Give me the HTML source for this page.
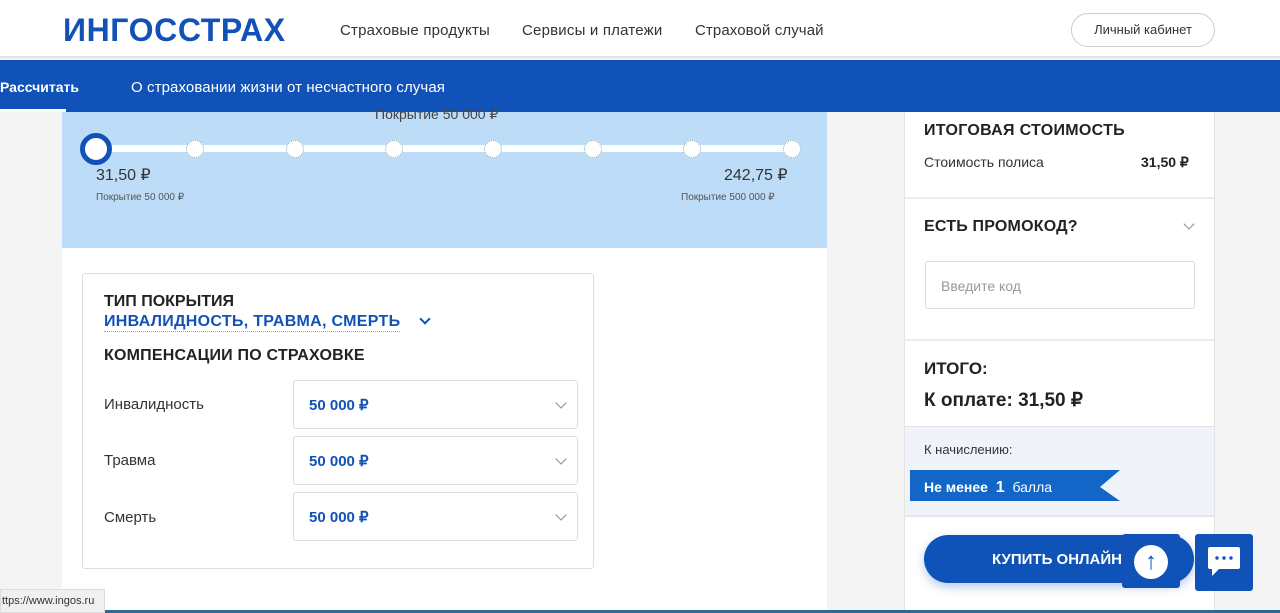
<!DOCTYPE html>
<html><head><meta charset="utf-8"><style>
*{margin:0;padding:0;box-sizing:border-box}
body{width:1280px;height:613px;overflow:hidden;background:#f4f4f4;font-family:"Liberation Sans",sans-serif;color:#222;position:relative}
.a{position:absolute}
.b{font-weight:bold}
.sel{position:absolute;left:293px;width:285px;height:49px;border:1px solid #ddd;border-radius:3px;background:#fff}
.sel span{position:absolute;left:15px;top:15px;color:#1252b8;font-weight:bold;font-size:15px}
.chev{position:absolute;width:8px;height:8px;border-right:1.5px solid #888;border-bottom:1.5px solid #888;transform:rotate(45deg)}
.dot{position:absolute;top:140px;width:18px;height:18px;border-radius:50%;background:#fff;border:1px dotted #8aa}
</style></head><body>
<div class="a" style="left:0;top:0;width:1280px;height:58px;background:#fff;border-bottom:2px solid #dfe8df"></div>
<div class="a b" style="left:63px;top:12px;font-size:32px;color:#1252b8;letter-spacing:0.6px">ИНГОССТРАХ</div>
<div class="a" style="left:340px;top:22px;font-size:15px;color:#333;letter-spacing:0.2px">Страховые продукты</div>
<div class="a" style="left:522px;top:22px;font-size:15px;color:#333;letter-spacing:0.2px">Сервисы и платежи</div>
<div class="a" style="left:695px;top:22px;font-size:15px;color:#333;letter-spacing:0.1px">Страховой случай</div>
<div class="a" style="left:1071px;top:13px;width:144px;height:34px;border:1px solid #ccc;border-radius:17px;font-size:13px;color:#333;text-align:center;line-height:32px">Личный кабинет</div>
<div class="a" style="left:0;top:60px;width:1280px;height:52px;background:#1052b7"></div>
<div class="a b" style="left:0;top:79px;font-size:14px;color:#fff">Рассчитать</div>
<div class="a" style="left:0;top:109px;width:66px;height:3px;background:#fff"></div>
<div class="a" style="left:131px;top:79px;font-size:15px;color:#fff;letter-spacing:0.1px">О страховании жизни от несчастного случая</div>
<div class="a" style="left:62px;top:112px;width:765px;height:501px;background:#fff"></div>
<div class="a" style="left:62px;top:112px;width:765px;height:136px;background:#bddcf7"></div>
<div class="a" style="left:375px;top:106px;font-size:14px;color:#444">Покрытие 50 000 ₽</div>
<div class="a" style="left:96px;top:145px;width:696px;height:7px;background:#fff"></div>
<div class="dot" style="left:186px"></div><div class="dot" style="left:286px"></div><div class="dot" style="left:385px"></div><div class="dot" style="left:484px"></div><div class="dot" style="left:584px"></div><div class="dot" style="left:683px"></div><div class="dot" style="left:783px"></div>
<div class="a" style="left:80px;top:133px;width:32px;height:32px;border-radius:50%;background:#fff;border:5px solid #1252b8"></div>
<div class="a" style="left:96px;top:165px;font-size:16px;color:#333">31,50 ₽</div>
<div class="a" style="left:96px;top:192px;font-size:10px;color:#555">Покрытие 50 000 ₽</div>
<div class="a" style="left:724px;top:165px;font-size:16px;color:#333">242,75 ₽</div>
<div class="a" style="left:681px;top:192px;font-size:10px;color:#555">Покрытие 500 000 ₽</div>
<div class="a" style="left:82px;top:273px;width:512px;height:296px;border:1px solid #ddd;border-radius:3px"></div>
<div class="a b" style="left:104px;top:293px;font-size:16px">ТИП ПОКРЫТИЯ</div>
<div class="a b" style="left:104px;top:313px;font-size:16px;color:#1252b8;border-bottom:1px dotted #8ab;letter-spacing:0.3px">ИНВАЛИДНОСТЬ, ТРАВМА, СМЕРТЬ</div>
<div class="chev" style="left:421px;top:315px;border-color:#1252b8;border-width:2px"></div>
<div class="a b" style="left:104px;top:347px;font-size:16px;letter-spacing:0.2px">КОМПЕНСАЦИИ ПО СТРАХОВКЕ</div>
<div class="a" style="left:104px;top:396px;font-size:15px;color:#333">Инвалидность</div>
<div class="a" style="left:104px;top:452px;font-size:15px;color:#333">Травма</div>
<div class="a" style="left:104px;top:509px;font-size:15px;color:#333">Смерть</div>
<div class="sel" style="top:380px"><span>50 000 ₽</span><div class="chev" style="left:263px;top:18px"></div></div>
<div class="sel" style="top:436px"><span>50 000 ₽</span><div class="chev" style="left:263px;top:18px"></div></div>
<div class="sel" style="top:492px"><span>50 000 ₽</span><div class="chev" style="left:263px;top:18px"></div></div>
<div class="a" style="left:904px;top:112px;width:311px;height:501px;background:#fff;border-left:1px solid #e3e3e3;border-right:1px solid #e3e3e3"></div>
<div class="a b" style="left:924px;top:122px;font-size:16px;letter-spacing:0.3px">ИТОГОВАЯ СТОИМОСТЬ</div>
<div class="a" style="left:924px;top:154px;font-size:14px;color:#333">Стоимость полиса</div>
<div class="a b" style="left:1141px;top:154px;font-size:14px">31,50 ₽</div>
<div class="a" style="left:905px;top:197px;width:309px;height:2px;background:#ececec"></div>
<div class="a b" style="left:924px;top:218px;font-size:16px;letter-spacing:0.2px">ЕСТЬ ПРОМОКОД?</div>
<div class="chev" style="left:1185px;top:220px"></div>
<div class="a" style="left:925px;top:261px;width:270px;height:48px;border:1px solid #ddd;border-radius:3px;font-size:14px;color:#999;padding:16px 0 0 15px">Введите код</div>
<div class="a" style="left:905px;top:339px;width:309px;height:2px;background:#ececec"></div>
<div class="a b" style="left:924px;top:359px;font-size:17px">ИТОГО:</div>
<div class="a b" style="left:924px;top:389px;font-size:19px">К оплате: 31,50 ₽</div>
<div class="a" style="left:905px;top:426px;width:309px;height:91px;background:#f0f4fa;border-top:1px solid #e3e3e3;border-bottom:2px solid #e6e6e6"></div>
<div class="a" style="left:924px;top:442px;font-size:13px;color:#333">К начислению:</div>
<svg class="a" style="left:910px;top:470px" width="214" height="36"><polygon points="0,0 210,0 190,17 210,31 0,31" fill="#1166c8"/></svg>
<div class="a b" style="left:924px;top:479px;font-size:14px;color:#fff">Не менее &nbsp;<span style="font-size:16px">1</span>&nbsp; <span style="font-weight:normal">балла</span></div>
<div class="a" style="left:924px;top:535px;width:270px;height:48px;border-radius:24px;background:#0f52b8;box-shadow:0 4px 10px rgba(15,82,184,.3)"></div>
<div class="a b" style="left:992px;top:551px;font-size:15px;color:#fff">КУПИТЬ ОНЛАЙН</div>
<div class="a" style="left:1122px;top:534px;width:58px;height:54px;background:#1052b7;border-radius:3px"></div>
<div class="a" style="left:1134px;top:545px;width:34px;height:34px;border-radius:50%;background:#fff;color:#1052b7;font-size:24px;font-weight:bold;text-align:center;line-height:34px">↑</div>
<div class="a" style="left:1195px;top:534px;width:58px;height:57px;background:#1052b7;border-radius:3px"></div>
<svg class="a" style="left:1207px;top:546px" width="34" height="32"><path d="M3 1h28a2 2 0 0 1 2 2v18a2 2 0 0 1-2 2H12l-7 7v-7H3a2 2 0 0 1-2-2V3a2 2 0 0 1 2-2z" fill="#fff"/><circle cx="10" cy="12" r="1.7" fill="#1052b7"/><circle cx="17" cy="12" r="1.7" fill="#1052b7"/><circle cx="24" cy="12" r="1.7" fill="#1052b7"/></svg>
<div class="a" style="left:0;top:589px;width:105px;height:24px;background:#f0f0f0;border:1px solid #ddd;font-size:11px;color:#333;padding:5px 0 0 1px">ttps://www.ingos.ru</div>
<div class="a" style="left:105px;top:610px;width:1175px;height:3px;background:#2a6a9a"></div>
</body></html>
